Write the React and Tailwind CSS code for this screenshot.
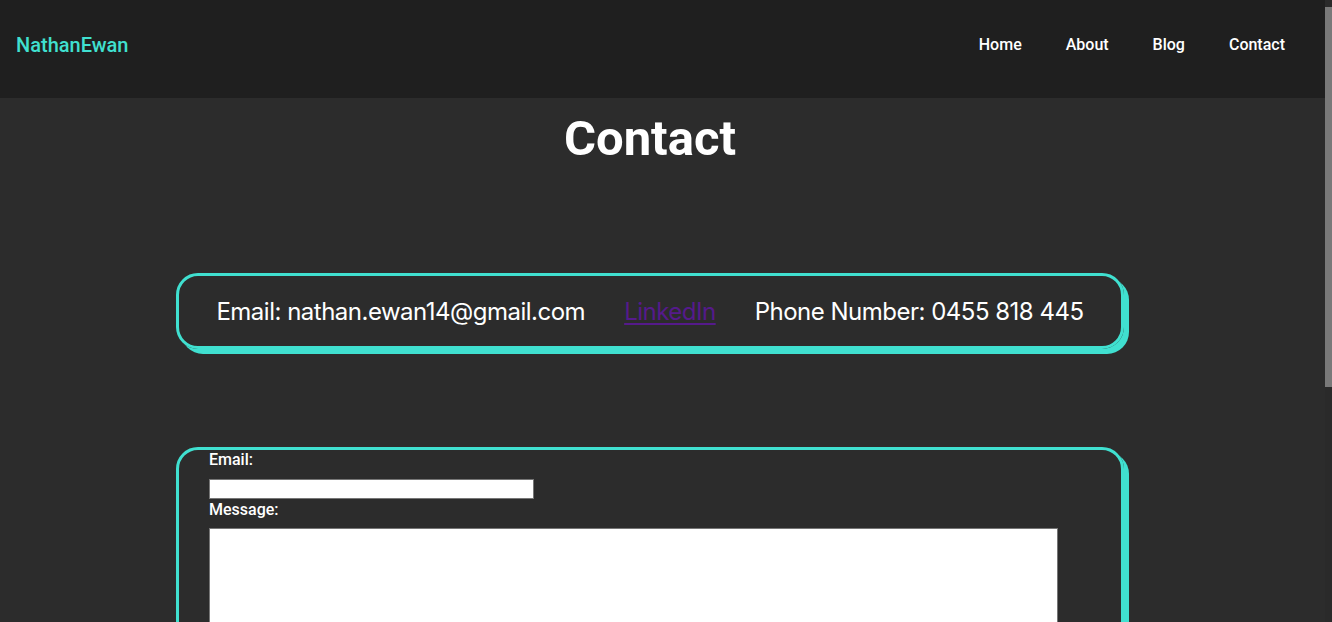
export default function App() {
  return (
    <div className="flex h-[622px] w-[1332px] overflow-hidden bg-[#2c2c2c]" style={{ fontFamily: "Roboto, sans-serif" }}>
      <div className="flex w-[1325px] flex-col">
        <header className="flex h-[98px] shrink-0 items-center justify-between bg-[#1f1f1f] pb-[9px] pl-4 pr-10">
          <a className="text-[20px] font-medium text-[#40e0d0]">NathanEwan</a>
          <nav className="flex gap-[44px] text-[16px] font-medium text-white">
            <a>Home</a>
            <a>About</a>
            <a>Blog</a>
            <a>Contact</a>
          </nav>
        </header>

        <main className="flex w-[1300px] shrink-0 flex-col items-center">
          <h1 className="mt-[12px] text-[49px] font-bold leading-[57px] text-white">Contact</h1>

          <div
            className="mt-[106px] flex h-[76px] w-[948px] shrink-0 items-center justify-center gap-[39px] rounded-[22px] border-[3px] border-[#40e0d0] pt-[2px] text-[24px] text-white shadow-[5px_5px_0_#40e0d0]"
            style={{ fontFamily: "Inter, sans-serif" }}
          >
            <span className="tracking-[-0.5px]">Email: nathan.ewan14@gmail.com</span>
            <a href="#" className="tracking-[-0.5px] text-[#551a8b] underline underline-offset-[3px]">LinkedIn</a>
            <span className="tracking-[-0.5px]">Phone Number: 0455 818 445</span>
          </div>

          <form className="mt-[98px] flex w-[948px] shrink-0 flex-col items-start rounded-[22px] border-[3px] border-[#40e0d0] pb-10 pl-[30px] shadow-[5px_5px_0_#40e0d0]">
            <label className="text-[16px] font-medium leading-[19px] text-white">Email:</label>
            <input type="text" className="mt-[10px] h-[20px] w-[325px] border border-[#767676] bg-white" />
            <label className="mt-[1px] text-[16px] font-medium leading-[19px] text-white">Message:</label>
            <textarea className="mt-[9px] h-[200px] w-[849px] resize-none border border-[#767676] bg-white" />
          </form>
        </main>
      </div>
      <div className="flex w-[7px] shrink-0 flex-col bg-[#2a2a2a]">
        <div className="h-[7px]" />
        <div className="h-[380px] bg-[#797979]" />
      </div>
    </div>
  );
}
